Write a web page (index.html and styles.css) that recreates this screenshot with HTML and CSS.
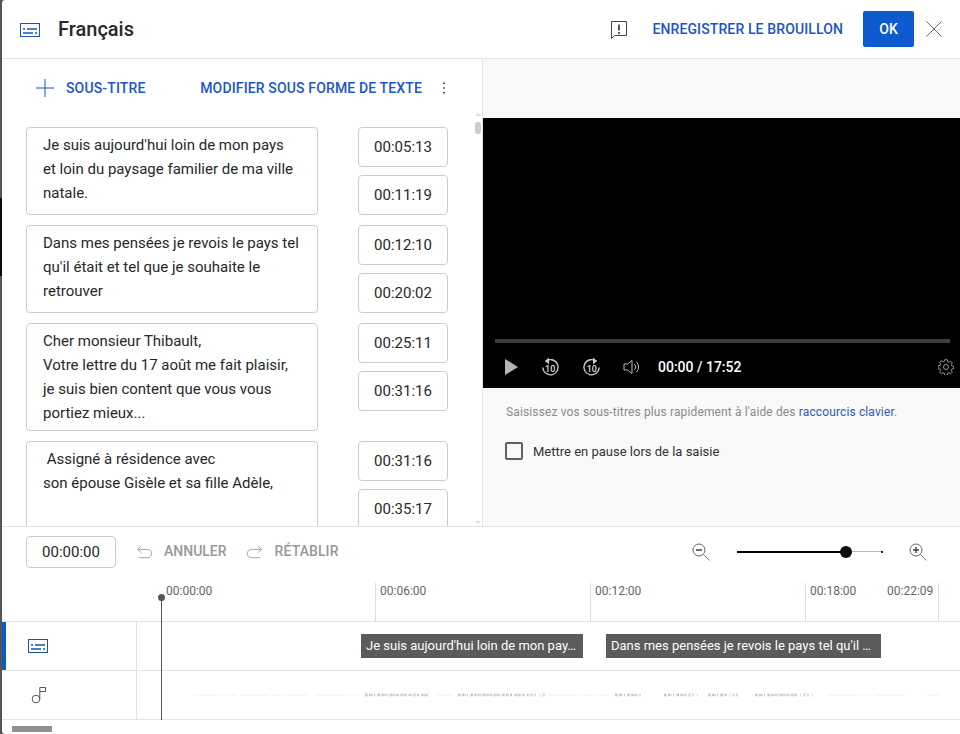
FILE: index.html
```html
<!DOCTYPE html>
<html lang="fr">
<head>
<meta charset="utf-8">
<title>Français</title>
<link rel="stylesheet" href="styles.css">
</head>
<body>
<div class="dialog">
  <header class="head">
    <svg class="cc-icon" width="20" height="14" viewBox="0 0 20 14"><rect x=".5" y=".5" width="19" height="13" fill="none" stroke="#1a56c4"/><path d="M3 6h2M7 6h10M3 10h10M15 10h2" stroke="#1a56c4" stroke-width="1.6"/></svg>
    <h1 class="title">Français</h1>
    <svg class="fb-icon" width="18" height="20" viewBox="0 0 18 20"><path d="M1.5 1.5h15v14H4.5l-3 3z" fill="none" stroke="#444"/><path d="M9 4.5v6M9 12v2" stroke="#333" stroke-width="1.6"/></svg>
    <span class="link save">ENREGISTRER LE BROUILLON</span>
    <button class="ok">OK</button>
    <svg class="close" width="18" height="18" viewBox="0 0 18 18"><path d="M1.5 1.5l15 15M16.5 1.5l-15 15" stroke="#666" fill="none"/></svg>
  </header>

  <div class="main">
    <section class="editor">
      <div class="actions">
        <svg class="plus" width="18" height="18" viewBox="0 0 18 18"><path d="M9 0v18M0 9h18" stroke="#1a56c4" fill="none"/></svg>
        <span class="link add">SOUS-TITRE</span>
        <span class="link edit">MODIFIER SOUS FORME DE TEXTE</span>
        <svg class="more" width="4" height="14" viewBox="0 0 4 14"><path d="M2 1.5v1.6M2 6.2v1.6M2 10.9v1.6" stroke="#444" stroke-width="1.7"/></svg>
      </div>
      <div class="list">
        <div class="cue">
          <div class="cue-text h88">Je suis aujourd'hui loin de mon pays<br>et loin du paysage familier de ma ville<br>natale.</div>
          <div class="times"><div class="time">00:05:13</div><div class="time">00:11:19</div></div>
        </div>
        <div class="cue">
          <div class="cue-text h88">Dans mes pensées je revois le pays tel<br>qu'il était et tel que je souhaite le<br>retrouver</div>
          <div class="times"><div class="time">00:12:10</div><div class="time">00:20:02</div></div>
        </div>
        <div class="cue cue-wide">
          <div class="cue-text h108">Cher monsieur Thibault,<br>Votre lettre du 17 août me fait plaisir,<br>je suis bien content que vous vous<br>portiez mieux...</div>
          <div class="times"><div class="time">00:25:11</div><div class="time">00:31:16</div></div>
        </div>
        <div class="cue">
          <div class="cue-text h108">&nbsp;Assigné à résidence avec<br>son épouse Gisèle et sa fille Adèle,</div>
          <div class="times"><div class="time">00:31:16</div><div class="time">00:35:17</div></div>
        </div>
      </div>
      <div class="scrollbar"><i class="arrow-up"></i><i class="thumb"></i><i class="arrow-down"></i></div>
    </section>

    <section class="preview">
      <div class="video">
        <div class="progress"></div>
        <div class="controls">
          <svg class="play" width="14" height="16" viewBox="0 0 14 16"><path d="M1 0l13 8-13 8z" fill="#b5b5b5"/></svg>
          <svg class="skip" width="20" height="22" viewBox="0 0 20 22"><path d="M5.5 5.5a7.6 7.6 0 1 1-2.6 6" fill="none" stroke="#ccc" stroke-width="1.3"/><path d="M9 1.5L5 5l4 3.5z" fill="#ccc"/><text x="10.2" y="16" class="ten">10</text></svg>
          <svg class="skip skip-b" width="20" height="22" viewBox="0 0 20 22"><path d="M14.5 5.5a7.6 7.6 0 1 0 2.6 6" fill="none" stroke="#ccc" stroke-width="1.3"/><path d="M11 1.5L15 5l-4 3.5z" fill="#ccc"/><text x="9.8" y="16" class="ten">10</text></svg>
          <svg class="vol" width="18" height="16" viewBox="0 0 18 16"><path d="M1 5h3.5L9 1.5v13L4.5 11H1z" fill="none" stroke="#bbb"/><path d="M11.5 5.2a4 4 0 0 1 0 5.600M13.500 3a7 7 0 0 1 0 10" fill="none" stroke="#bbb"/></svg>
          <span class="clock">00:00 / 17:52</span>
          <svg class="gear" width="16" height="16" viewBox="0 0 16 16"><path d="M6.800.7h2.400l.4 2 1.300.6 1.700-1.100 1.700 1.700-1.100 1.700.6 1.300 2 .4v2.400l-2 .4-.6 1.300 1.100 1.700-1.700 1.700-1.700-1.100-1.300.6-.4 2H6.800l-.4-2-1.300-.6-1.700 1.100-1.700-1.700 1.100-1.700-.6-1.300-2-.4V6.800l2-.4.6-1.300-1.100-1.700 1.700-1.700 1.700 1.100 1.300-.6z" fill="none" stroke="#999"/><circle cx="8" cy="8" r="2.500" fill="none" stroke="#999"/></svg>
        </div>
      </div>
      <p class="hint">Saisissez vos sous-titres plus rapidement à l'aide des <span class="hint-link">raccourcis clavier</span>.</p>
      <label class="pause"><span class="box"></span>Mettre en pause lors de la saisie</label>
    </section>
  </div>

  <div class="toolbar">
    <div class="time current">00:00:00</div>
    <svg class="undo" width="16" height="14" viewBox="0 0 18 16"><path d="M6 1L1.500 5 6 9M2 5h11a3.500 3.500 0 0 1 0 9.500H3" fill="none" stroke="#999"/></svg>
    <span class="off off-a">ANNULER</span>
    <svg class="redo" width="16" height="14" viewBox="0 0 18 16"><path d="M12 1l4.500 4L12 9M16 5H5a3.500 3.500 0 0 0 0 9.500h10" fill="none" stroke="#999"/></svg>
    <span class="off">RÉTABLIR</span>
    <svg class="zoom-out" width="18" height="18" viewBox="0 0 18 18"><circle cx="7" cy="7" r="6" fill="none" stroke="#666"/><path d="M4 7h6" stroke="#444" stroke-width="1.500"/><path d="M11.500 11.500L17.500 17.500" stroke="#777"/></svg>
    <div class="slider"><i class="fill"></i><i class="knob"></i><i class="rest"></i><i class="end"></i></div>
    <svg class="zoom-in" width="18" height="18" viewBox="0 0 18 18"><circle cx="7" cy="7" r="6" fill="none" stroke="#666"/><path d="M4 7h6M7 4v6" stroke="#444" stroke-width="1.500"/><path d="M11.500 11.500L17.500 17.500" stroke="#777"/></svg>
  </div>

  <div class="timeline">
    <div class="ruler">
      <span class="tick t0">00:00:00</span>
      <span class="tick t1"><b>00:06:00</b></span>
      <span class="tick t2"><b>00:12:00</b></span>
      <span class="tick t3"><b>00:18:00</b></span>
      <span class="tick t4"><b>00:22:09</b></span>
    </div>
    <div class="track track-active">
      <div class="track-head">
        <svg width="20" height="14" viewBox="0 0 20 14"><rect x=".5" y=".5" width="19" height="13" fill="none" stroke="#1a56a0"/><path d="M3 6h2M7 6h10M3 10h10M15 10h2" stroke="#1a56a0" stroke-width="1.600"/></svg>
      </div>
      <div class="track-body">
        <div class="clip c1">Je suis aujourd'hui loin de mon pay…</div>
        <div class="clip c2">Dans mes pensées je revois le pays tel qu'il …</div>
      </div>
    </div>
    <div class="track">
      <div class="track-head">
        <svg width="16" height="18" viewBox="0 0 16 18"><circle cx="5" cy="13" r="3.800" fill="none" stroke="#555"/><path d="M8.800 13V1.500h5.700v4H9" fill="none" stroke="#555"/></svg>
      </div>
      <div class="track-body">
        <svg class="wave" width="824" height="10" viewBox="0 0 824 10">
          <path class="w-faint" d="M56 5H170M178 5H222M300 5H316M412 5H472M690 5H770M790 5H802"/>
          <path class="w-soft" d="M228 5H292M321 5H408M478 5H504M527 5H563M571 5H603M618 5H676"/>
          <path class="w-strong" d="M228 5H292M321 5H392M478 5H502M527 5H550M571 5H590M618 5H660"/>
        </svg>
      </div>
    </div>
    <div class="playhead"></div>
  </div>
  <div class="hscroll"><i class="hthumb"></i></div>
</div>
</body>
</html>
```
FILE: styles.css
```css
* { box-sizing: border-box; }
html, body { height: 100%; }
body {
  margin: 0;
  height: 734px;
  overflow: hidden;
  padding-left: 2px;
  font-family: Roboto, "Liberation Sans", sans-serif;
  color: #282828;
  background: linear-gradient(#555 0 198px, #0a0a0a 198px 276px, #555 276px);
}
.dialog {
  position: relative;
  height: 734px;
  display: flex;
  flex-direction: column;
  background: #fff;
  border-radius: 3px 0 0 3px;
}
.head {
  height: 59px;
  flex: none;
  display: flex;
  align-items: center;
  border-bottom: 1px solid #e3e3e3;
  padding: 0 17px 1px 18px;
}
.cc-icon { flex: none; margin-top: 2px; }
.title { margin: 0 0 0 18px; font-size: 20px; font-weight: 500; flex: 1; }
.fb-icon { margin: 3px 24px 0 0; }
.link { font-size: 14px; font-weight: 500; color: #1a56c4; white-space: nowrap; letter-spacing: .14px; }
.save { letter-spacing: .12px; }
.ok {
  width: 51px; height: 36px; margin: 0 11px 0 20px;
  border: 0; border-radius: 2px; background: #0d5bcf; color: #fff;
  font: 500 14px Roboto, sans-serif;
}
.close { flex: none; }

.main { flex: none; height: 468px; display: flex; border-bottom: 1px solid #e3e3e3; }
.editor {
  position: relative;
  width: 481px;
  flex: none;
  border-right: 1px solid #e3e3e3;
  overflow: hidden;
}
.actions { height: 58px; display: flex; align-items: center; padding: 0 36px 0 34px; }
.plus { flex: none; }
.add { margin-left: 12px; flex: 1; }
.more { margin-left: 20px; }
.list { padding: 10px 0 0 24px; }
.cue { display: flex; gap: 40px; margin-bottom: 10px; width: 422px; }
.cue-wide .times { height: 88px; }
.cue-text {
  width: 292px; flex: none;
  border: 1px solid #ccc; border-radius: 4px;
  padding: 5px 16px 3px;
  font-size: 15px; line-height: 24px; white-space: nowrap;
}
.h88 { height: 88px; }
.h108 { height: 108px; }
.times { display: flex; flex-direction: column; gap: 8px; width: 90px; flex: none; }
.time {
  height: 40px;
  border: 1px solid #ccc; border-radius: 4px;
  display: flex; align-items: center; justify-content: center;
  font-size: 15px;
}
.scrollbar {
  position: absolute; right: 1px; top: 54px; bottom: 2px; width: 7px;
  display: flex; flex-direction: column; align-items: center;
}
.thumb { width: 6px; height: 12px; margin-top: 6px; background: #ccc; border-radius: 3px; }
.arrow-up { width: 0; height: 0; border: 3px solid transparent; border-top: 0; border-bottom-color: #ddd; }
.arrow-down { width: 0; height: 0; margin-top: auto; border: 3px solid transparent; border-bottom: 0; border-top-color: #ddd; }

.preview { flex: 1; background: #f9f9f9; padding-top: 59px; }
.video {
  height: 270px; background: #000;
  display: flex; flex-direction: column; justify-content: flex-end;
}
.progress { height: 4px; margin: 0 10px 0 12px; background: #3d3d3d; }
.controls { height: 45px; display: flex; align-items: center; padding: 2px 6px 0 21px; }
.play { flex: none; }
.skip { margin-left: 22px; flex: none; }
.skip-b { margin-left: 22px; }
.ten { font: 500 9px Roboto, sans-serif; fill: #ddd; text-anchor: middle; }
.vol { margin-left: 21px; flex: none; }
.clock { margin-left: 17px; flex: 1; color: #fff; font-size: 14px; font-weight: 500; }
.hint { margin: 16px 0 0 23px; font-size: 12px; line-height: 16px; color: #8a8a8a; white-space: nowrap; letter-spacing: .13px; }
.hint-link { color: #2a5db0; }
.pause { display: flex; align-items: center; margin: 22px 0 0 22px; font-size: 13px; color: #333; }
.box { width: 18px; height: 18px; margin-right: 10px; border: 2px solid #606060; border-radius: 2px; }

.toolbar { height: 49px; flex: none; display: flex; align-items: center; padding: 0 33px 0 24px; }
.current { width: 90px; height: 32px; }
.undo { margin-left: 20px; flex: none; }
.off { font-size: 14px; font-weight: 500; color: #979797; margin: 0 0 2px 12px; letter-spacing: .1px; }
.off-a { margin-right: 20px; letter-spacing: 0; }
.redo { flex: none; }
.zoom-out { margin-left: auto; }
.zoom-in { flex: none; }
.slider { position: relative; width: 146px; height: 12px; margin: 0 26px 0 27px; }
.fill { position: absolute; left: 0; width: 109px; top: 5px; height: 2px; background: #000; }
.knob { position: absolute; left: 103px; top: 0; width: 12px; height: 12px; border-radius: 50%; background: #0a0a0a; }
.rest { position: absolute; left: 115px; right: 1px; top: 5.500px; height: 1px; background: #bbb; }
.end { position: absolute; right: 0; top: 5px; width: 2px; height: 2px; background: #222; }

.timeline { position: relative; flex: none; }
.ruler { position: relative; height: 46px; border-bottom: 1px solid #e3e3e3; }
.tick { position: absolute; top: 7px; font-size: 12px; line-height: 16px; color: #666; }
.tick b { font-weight: 400; }
.t0 { left: 164px; }
.t1 { left: 373px; top: 7px; height: 39px; border-left: 1px solid #ddd; padding-left: 4px; }
.t2 { left: 588px; height: 39px; border-left: 1px solid #ddd; padding-left: 4px; }
.t3 { left: 803px; height: 39px; border-left: 1px solid #ddd; padding-left: 4px; }
.t4 { left: 885px; width: 52px; height: 39px; border-right: 1px solid #ddd; }
.track { height: 49px; display: flex; border-bottom: 1px solid #e3e3e3; }
.track-head { width: 135px; flex: none; display: flex; align-items: center; border-right: 1px solid #e3e3e3; padding-left: 29px; }
.track-active .track-head { border-left: 4px solid #0d5bcf; padding-left: 22px; }
.track-body { position: relative; flex: 1; }
.clip {
  position: absolute; top: 12px; height: 24px; padding: 0 5px;
  background: #5b5b5b; color: #fff; font-size: 13px; line-height: 24px; white-space: nowrap; overflow: hidden;
}
.c1 { left: 224px; width: 222px; }
.c2 { left: 469px; width: 275px; }
.wave { position: absolute; left: 0; top: 19px; }
.w-faint { stroke: #efefef; stroke-width: 1; stroke-dasharray: 30 2 12 3; fill: none; }
.w-soft { stroke: #dcdcdc; stroke-width: 3; stroke-dasharray: 3 1 2 3 1 2; fill: none; }
.w-strong { stroke: #b5b5b5; stroke-width: 1; stroke-dasharray: 2 2 4 1 1 3; fill: none; }
.playhead { position: absolute; left: 159px; top: 21px; bottom: 0; width: 1px; background: #555; }
.playhead::before { content: ""; position: absolute; left: -3px; top: -3px; width: 7px; height: 7px; border-radius: 50%; background: #555; }
.hscroll { flex: 1; padding: 6px 0 0 10px; }
.hthumb { display: block; width: 40px; height: 6px; background: #909090; }
```
